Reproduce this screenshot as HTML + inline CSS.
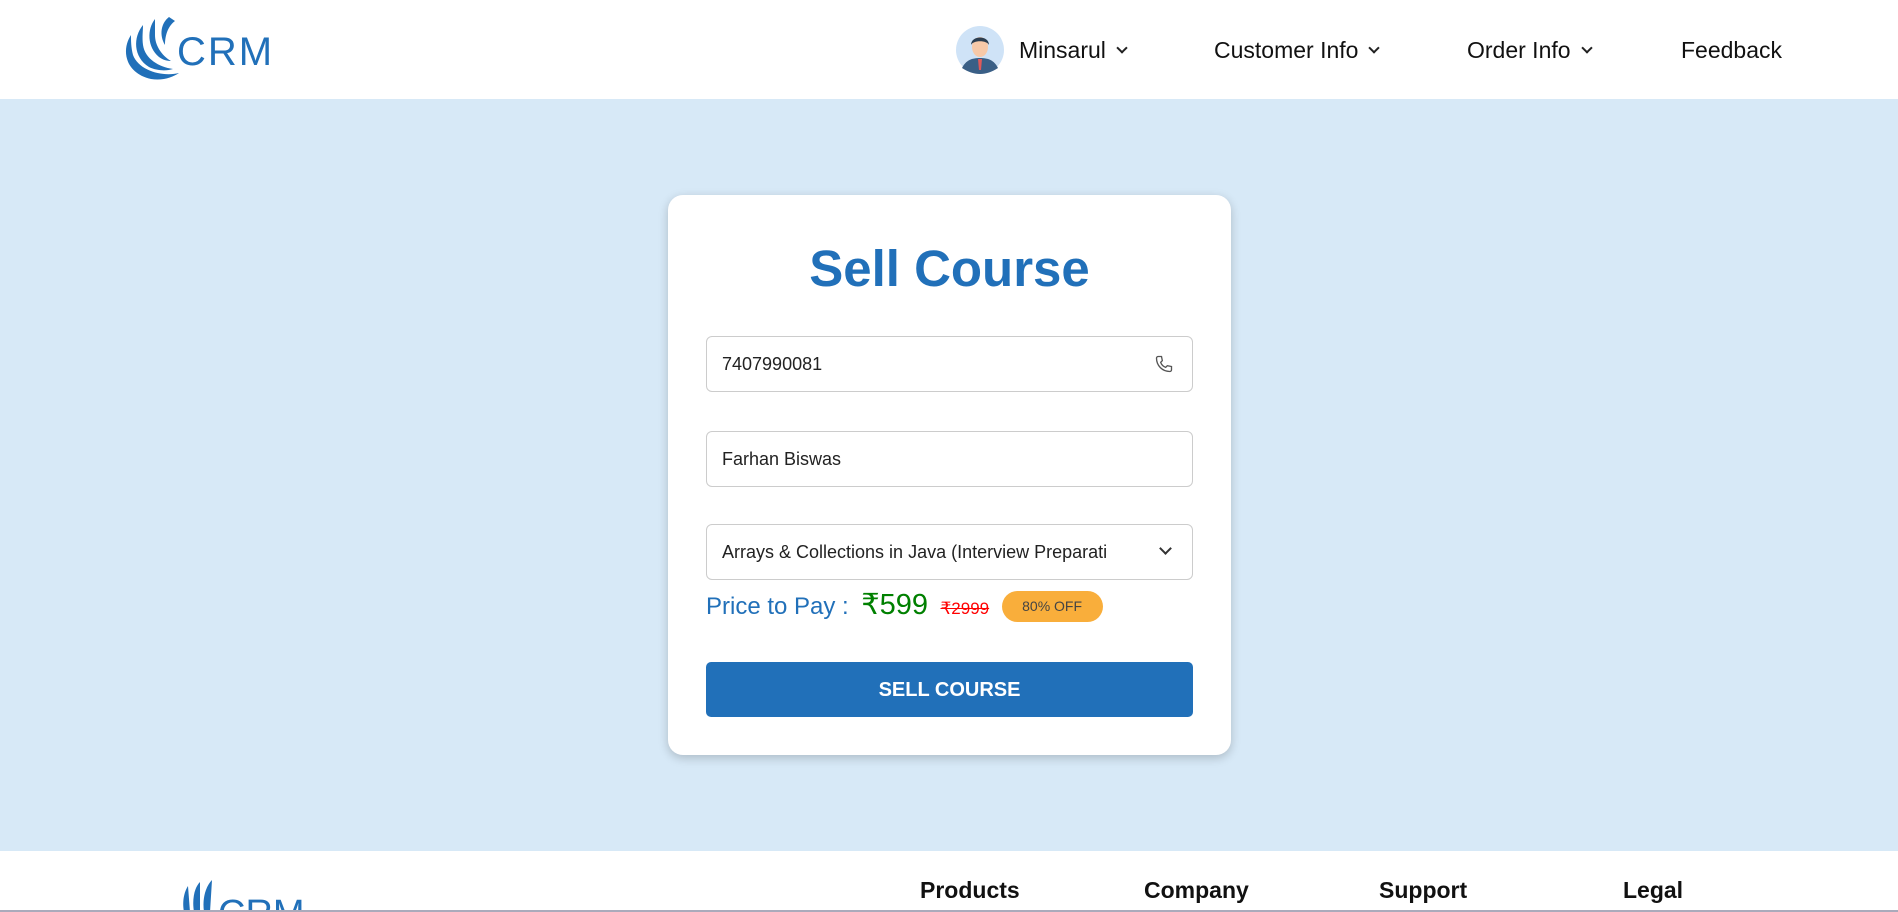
<!DOCTYPE html>
<html><head><meta charset="utf-8"><style>
*{box-sizing:border-box;margin:0;padding:0}
body{width:1898px;height:912px;overflow:hidden;font-family:"Liberation Sans",sans-serif;background:#fff;position:relative}
.hdr{position:absolute;left:0;top:0;width:1898px;height:99px;background:#fff}
.nav{position:absolute;top:37px;font-size:23px;color:#111}
.chev{display:inline-block;width:8px;height:8px;border-right:2px solid #222;border-bottom:2px solid #222;transform:rotate(45deg);margin-left:12px;position:relative;top:-6px}
.main{position:absolute;left:0;top:99px;width:1898px;height:752px;background:#d7e9f7}
.card{position:absolute;left:668px;top:195px;width:563px;height:560px;background:#fff;border-radius:15px;box-shadow:0 3px 10px rgba(0,0,0,.2)}
.title{position:absolute;left:0;width:100%;top:44px;text-align:center;font-size:51px;font-weight:bold;color:#2170b9}
.inp{position:absolute;left:38px;width:487px;height:56px;border:1px solid #ccc;border-radius:6px;font-size:18px;color:#222;padding:17px 15px}
.price{position:absolute;left:38px;top:392px;white-space:nowrap}
.btn{position:absolute;left:38px;top:467px;width:487px;height:55px;background:#2170b9;border-radius:5px;color:#fff;font-weight:bold;font-size:20px;text-align:center;line-height:57px}
.ft{position:absolute;top:877px;font-size:23px;font-weight:bold;color:#111}
</style></head><body>
<div class="hdr">
<svg style="position:absolute;left:119px;top:15px" width="150" height="68" viewBox="0 0 150 68">
<g fill="#2170b9">
<path d="M12 20 C2 35 6 58 32 64 C44 66 54 62 60 58 C44 62 20 56 14 40 C12 32 12 26 12 20Z"/>
<path d="M24 10 C14 22 14 42 30 52 C38 56 48 56 54 54 C40 52 26 44 24 30 C23 22 24 16 24 10Z"/>
<path d="M36 4 C28 14 28 32 40 42 C44 45 48 46 52 46 C42 40 36 30 36 20 C36 14 36 9 36 4Z"/>
<path d="M50 2 C42 8 40 20 46 30 C46 22 48 12 56 6Z"/>
</g>
<text x="58" y="50" font-family="Liberation Sans,sans-serif" font-size="40" fill="#2170b9" letter-spacing="2">CRM</text>
</svg>
<svg style="position:absolute;left:956px;top:26px" width="48" height="48" viewBox="0 0 48 48">
<circle cx="24" cy="24" r="24" fill="#cfe3f7"/>
<path d="M6 42 C10 34 16 32 24 32 C32 32 38 34 42 42 C36 46 30 48 24 48 C18 48 12 46 6 42Z" fill="#3a5f86"/>
<path d="M22 33 L26 33 L25 44 L23 44Z" fill="#e05a5a"/>
<ellipse cx="24" cy="21" rx="8" ry="10" fill="#f7c9a8"/>
<path d="M15 19 C15 9 33 9 33 19 C31 14 17 14 15 19Z" fill="#2c3e50"/>
</svg>
<div class="nav" style="left:1019px">Minsarul<span class="chev"></span></div>
<div class="nav" style="left:1214px">Customer Info<span class="chev"></span></div>
<div class="nav" style="left:1467px">Order Info<span class="chev"></span></div>
<div class="nav" style="left:1681px">Feedback</div>
</div>
<div class="main">
<div class="card" style="top:96px">
<div class="title">Sell Course</div>
<div class="inp" style="top:141px">7407990081
<svg style="position:absolute;right:18px;top:17px" width="20" height="20" viewBox="0 0 24 24" fill="none" stroke="#555" stroke-width="1.6"><path d="M5 3 L9 3 L10 8 L8 10 C9 13 11 15 14 16 L16 14 L21 15 L21 19 C21 20 20 21 19 21 C10 21 3 14 3 5 C3 4 4 3 5 3Z"/></svg></div>
<div class="inp" style="top:236px">Farhan Biswas</div>
<div class="inp" style="top:329px">Arrays &amp; Collections in Java (Interview Preparati
<span style="position:absolute;right:22px;top:19px;width:9px;height:9px;border-right:2px solid #333;border-bottom:2px solid #333;transform:rotate(45deg)"></span></div>
<div class="price"><span style="font-size:24px;color:#2170b9">Price to Pay :</span>
<span style="font-size:29px;color:#008000;margin-left:8px">₹599</span>
<span style="font-size:17px;color:#ff0000;text-decoration:line-through;margin-left:8px">₹2999</span>
<span style="display:inline-block;background:#f9ae3b;color:#444;font-size:14px;border-radius:16px;width:101px;height:31px;line-height:31px;text-align:center;margin-left:8px;vertical-align:3px">80% OFF</span></div>
<div class="btn">SELL COURSE</div>
</div>
</div>
<svg style="position:absolute;left:180px;top:878px" width="160" height="34" viewBox="0 0 160 34">
<g fill="#2170b9"><path d="M4 34 C2 24 4 14 8 8 L10 34Z"/><path d="M14 34 C12 22 14 10 20 4 L20 34Z"/><path d="M24 34 C22 20 26 8 32 2 L30 34Z"/></g>
<text x="38" y="48" font-family="Liberation Sans,sans-serif" font-size="38" fill="#2170b9">CRM</text>
</svg>
<div class="ft" style="left:920px">Products</div>
<div class="ft" style="left:1144px">Company</div>
<div class="ft" style="left:1379px">Support</div>
<div class="ft" style="left:1623px">Legal</div>
<div style="position:absolute;left:0;top:910px;width:1898px;height:2px;background:#aab"></div>
</body></html>
